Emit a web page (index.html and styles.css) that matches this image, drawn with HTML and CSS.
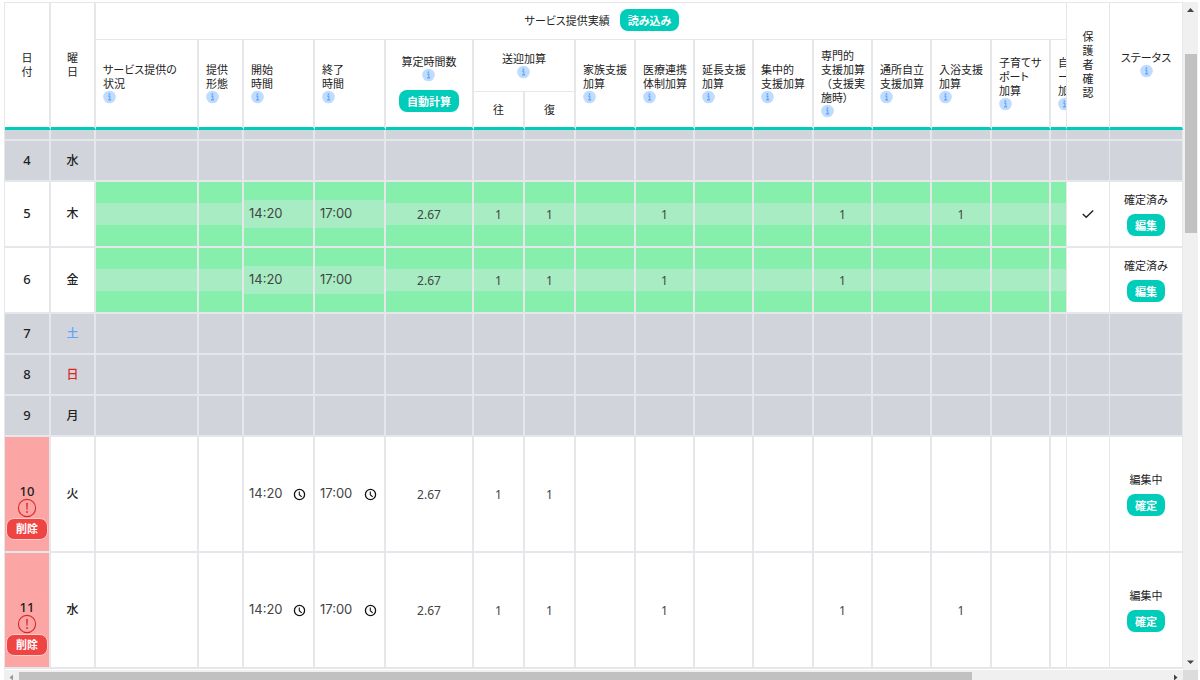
FILE: index.html
```html
<!DOCTYPE html>
<html lang="ja">
<head>
<meta charset="utf-8">
<title>サービス提供実績</title>
<link rel="stylesheet" href="styles.css">
</head>
<body>
<svg class="sprite" aria-hidden="true">
  <symbol id="i-info" viewBox="0 0 13 13">
    <circle cx="6.5" cy="6.5" r="6.3" fill="#bfdbfe"/>
    <path d="M5.2 5.6h1.6v3.6M5 9.4h3.2" fill="none" stroke="#60a5fa" stroke-width="1.1"/>
    <circle cx="6.4" cy="3.6" r=".9" fill="#60a5fa"/>
  </symbol>
  <symbol id="i-check" viewBox="0 0 12 10">
    <path d="M.8 5 4.2 8.3 11.2 1.4" fill="none" stroke="#222" stroke-width="1.4"/>
  </symbol>
  <symbol id="i-clock" viewBox="0 0 13 13">
    <circle cx="6.5" cy="6.5" r="5.1" fill="none" stroke="#111" stroke-width="1.3"/>
    <path d="M6.3 3.4v3.3l2.4 2.2" fill="none" stroke="#111" stroke-width="1.1"/>
  </symbol>
  <symbol id="i-alert" viewBox="0 0 20 20">
    <circle cx="10" cy="10" r="8.6" fill="none" stroke="#dc2626" stroke-width="1.1"/>
    <path d="M9.2 5h1.6l-.3 6.8h-1z" fill="#dc2626"/>
    <circle cx="10" cy="14" r=".9" fill="#dc2626"/>
  </symbol>
</svg>

<main class="viewport">
  <div class="pane">
    <table class="sheet">
      <colgroup>
        <col class="c-date"><col class="c-week"><col><col class="c-form">
        <col class="c-time"><col class="c-time"><col class="c-hours">
        <col class="c-ride"><col class="c-ride">
        <col class="c-wide"><col class="c-add"><col class="c-add"><col class="c-wide">
        <col class="c-add"><col class="c-add"><col class="c-wide"><col class="c-add">
        <col class="c-cut"><col class="c-guard"><col class="c-status">
      </colgroup>
      <thead>
        <tr class="h-title">
          <th rowspan="3" class="end">日<br>付</th>
          <th rowspan="3" class="end">曜<br>日</th>
          <th colspan="16" class="group thin">サービス提供実績<button type="button" class="btn">読み込み</button></th>
          <th rowspan="3" class="end thin">保<br>護<br>者<br>確<br>認</th>
          <th rowspan="3" class="end thin">ステータス<svg class="info"><use href="#i-info"/></svg></th>
        </tr>
        <tr class="h-main">
          <th rowspan="2" class="end left">サービス提供の<br>状況<svg class="info"><use href="#i-info"/></svg></th>
          <th rowspan="2" class="end left">提供<br>形態<svg class="info"><use href="#i-info"/></svg></th>
          <th rowspan="2" class="end left">開始<br>時間<svg class="info"><use href="#i-info"/></svg></th>
          <th rowspan="2" class="end left">終了<br>時間<svg class="info"><use href="#i-info"/></svg></th>
          <th rowspan="2" class="end calc">算定時間数<svg class="info"><use href="#i-info"/></svg><button type="button" class="btn">自動計算</button></th>
          <th colspan="2">送迎加算<svg class="info"><use href="#i-info"/></svg></th>
          <th rowspan="2" class="end left">家族支援<br>加算<svg class="info"><use href="#i-info"/></svg></th>
          <th rowspan="2" class="end left">医療連携<br>体制加算<svg class="info"><use href="#i-info"/></svg></th>
          <th rowspan="2" class="end left">延長支援<br>加算<svg class="info"><use href="#i-info"/></svg></th>
          <th rowspan="2" class="end left">集中的<br>支援加算<svg class="info"><use href="#i-info"/></svg></th>
          <th rowspan="2" class="end left">専門的<br>支援加算<br><span class="full">（支援実</span><br>施時）<svg class="info"><use href="#i-info"/></svg></th>
          <th rowspan="2" class="end left">通所自立<br>支援加算<svg class="info"><use href="#i-info"/></svg></th>
          <th rowspan="2" class="end left">入浴支援<br>加算<svg class="info"><use href="#i-info"/></svg></th>
          <th rowspan="2" class="end left">子育てサ<br>ポート<br>加算<svg class="info"><use href="#i-info"/></svg></th>
          <th rowspan="2" class="end left thin">自<br>ー<br>加<svg class="info"><use href="#i-info"/></svg></th>
        </tr>
        <tr class="h-ride">
          <th class="end">往</th>
          <th class="end">復</th>
        </tr>
      </thead>
      <tbody id="days"></tbody>
    </table>
  </div>
  <div class="bar vertical">
    <button type="button" class="arrow" aria-label="上へ"><svg viewBox="0 0 15 15"><path d="M4 10 7.5 6 11 10z" fill="#444"/></svg></button>
    <div class="track"><span class="thumb"></span></div>
    <button type="button" class="arrow" aria-label="下へ"><svg viewBox="0 0 15 15"><path d="M4 5.500h7L7.500 9z" fill="#444"/></svg></button>
  </div>
  <div class="bar horizontal">
    <button type="button" class="arrow" aria-label="左へ"><svg viewBox="0 0 15 15"><path d="M9 4.500v6L5.500 7.500z" fill="#999"/></svg></button>
    <div class="track"><span class="thumb"></span></div>
    <button type="button" class="arrow" aria-label="右へ"><svg viewBox="0 0 15 15"><path d="M6 4.500v6L9.500 7.500z" fill="#444"/></svg></button>
  </div>
  <div class="corner"></div>
</main>
<script src="script.js"></script>
</body>
</html>
```
FILE: styles.css
```css
* { box-sizing: border-box; }

body {
  margin: 0;
  padding: 2px 2px 0 4px;
  height: 100vh;
  overflow: hidden;
  background: #fff;
  color: #222;
  font: 11px/14px "Noto Sans CJK JP", sans-serif;
  font-feature-settings: "palt";
}

.sprite { display: none; }

button, input, select { font: inherit; color: inherit; margin: 0; }

.viewport {
  display: grid;
  grid-template-columns: minmax(0, 1fr) 15px;
  grid-template-rows: auto 15px;
}

.pane {
  border-top: 1px solid #e5e7eb;
  border-left: 1px solid #e5e7eb;
  padding-bottom: 1px;
}

/* table */
.sheet {
  width: 100%;
  table-layout: fixed;
  border-collapse: separate;
  border-spacing: 0;
}
.c-date { width: 46px; }
.c-week, .c-form { width: 45px; }
.c-time { width: 71px; }
.c-hours { width: 88px; }
.c-ride { width: 51px; }
.c-wide { width: 60px; }
.c-add { width: 59px; }
.c-cut { width: 16px; }
.c-guard { width: 43px; }
.c-status { width: 73px; }

th, td {
  padding: 0;
  border: solid #e5e7eb;
  border-width: 0 2px 2px 0;
  text-align: center;
  vertical-align: middle;
  overflow: hidden;
}
th { font-weight: 400; border-bottom-width: 1px; padding-bottom: 2px; }
th.end { border-bottom: 3px solid #00cdb9; }
th.left { padding-left: 7px; text-align: left; white-space: nowrap; }
th.group { padding-left: 42px; }
th.group .btn { margin-left: 10px; }
.thin { border-right-width: 1px; }

.h-title { height: 37px; }
.h-main { height: 52px; }
.h-ride { height: 38px; }

.full { font-feature-settings: normal; }
.info { display: block; width: 13px; height: 14px; margin: 0 auto; }
.left .info { margin: 0; }
.calc .btn { margin-top: 8px; }

.btn {
  height: 22px;
  padding: 0 8px;
  border: 0;
  border-radius: 8px;
  background: #00cdb9;
  color: #fff;
  font-weight: 700;
  line-height: 20px;
  white-space: nowrap;
}
.btn.danger {
  display: block;
  margin: 0 auto;
  padding: 0 9px;
  border: 1px solid #fecaca;
  background: #ef4444;
  font-size: 11px;
}

/* day rows */
.slice { height: 11px; }
.closed { height: 41px; }
.fixed { height: 66px; }
.editing { height: 116px; }
.slice td, .closed td { background: #d1d5db; }
.fixed .entry { background: #86efac; }
.day, .week { font-family: "Noto Sans", "Noto Sans CJK JP", sans-serif; font-size: 12px; font-weight: 500; }
.day { font-size: 13px; }
.fixed .day, .closed .day { padding-bottom: 2px; }
.sat { color: #60a5fa; }
.sun { color: #dc2626; }
.editing .day { background: #fca5a5; vertical-align: bottom; padding-bottom: 11px; }
.alert { display: block; width: 20px; height: 20px; margin: 0 auto; }

.field {
  display: block;
  width: 100%;
  height: 22px;
  padding: 0;
  border: 0;
  border-radius: 0;
  appearance: none;
  background: transparent;
  color: #444;
  font: 12px "Noto Sans", sans-serif;
  text-align: center;
  text-align-last: center;
  opacity: 1;
}
.time { display: flex; align-items: center; height: 28px; padding: 0 7px 2px 5px; }
.time .field { flex: 1; min-width: 0; height: 26px; font: 13px Inter, sans-serif; text-align: left; text-align-last: left; }
.fixed select.field, .fixed .hours, .fixed .time { background: rgba(229, 231, 235, 0.35); }
.fixed .time .field { background: transparent; }
.picker { display: flex; padding: 2px 0 0; border: 0; background: none; }
.picker svg { width: 13px; height: 13px; }
.check { display: block; width: 12px; height: 10px; margin: 0 auto; }
.state { display: flex; flex-direction: column; align-items: center; gap: 8px; }

/* scroll bars */
.bar { display: flex; background: #f0f0f0; }
.vertical { flex-direction: column; }
.arrow { flex: none; width: 15px; height: 15px; padding: 0; border: 0; background: none; }
.arrow svg { display: block; }
.track { flex: 1; display: flex; }
.vertical .track { flex-direction: column; padding: 0 1px 0 2px; }
.vertical .track::before { content: ""; flex: 37; }
.vertical .thumb { flex: 178; }
.vertical .track::after { content: ""; flex: 421; }
.horizontal .track { padding: 2px 0; }
.horizontal .thumb { flex: 952; }
.horizontal .track::after { content: ""; flex: 196; }
.thumb { background: #c1c1c1; }
.corner { background: #dcdcdc; }
```
FILE: script.js
```js
const ADDITIONS = ["家族支援加算", "医療連携体制加算", "延長支援加算", "集中的支援加算",
  "専門的支援加算", "通所自立支援加算", "入浴支援加算", "子育てサポート加算", "自立サポート加算"];

const days = [
  { kind: "slice" },
  { kind: "closed", day: 4, week: "水" },
  { kind: "fixed", day: 5, week: "木", on: [1, 4, 6], checked: true },
  { kind: "fixed", day: 6, week: "金", on: [1, 4] },
  { kind: "closed", day: 7, week: "土", tone: "sat" },
  { kind: "closed", day: 8, week: "日", tone: "sun" },
  { kind: "closed", day: 9, week: "月" },
  { kind: "editing", day: 10, week: "火", on: [] },
  { kind: "editing", day: 11, week: "水", on: [1, 4, 6] }
];

const icon = (id, cls) => `<svg class="${cls}"><use href="#i-${id}"/></svg>`;
const cell = (html, cls = "") => `<td class="${cls}">${html}</td>`;

function row(d) {
  const open = d.kind === "fixed" || d.kind === "editing";
  const off = d.kind === "fixed" ? "disabled" : "";
  const select = (label, value) =>
    `<select class="field" aria-label="${d.day}日 ${label}" ${off}><option>${value}</option></select>`;
  const time = (label, value) =>
    `<div class="time"><input class="field" type="text" aria-label="${d.day}日 ${label}" value="${value}" ${off}>` +
    (off ? "" : `<button type="button" class="picker" aria-label="時刻を選択">${icon("clock", "clock")}</button>`) + `</div>`;

  let html = cell((d.day || "") + (d.kind === "editing"
    ? icon("alert", "alert") + `<button type="button" class="btn danger">削除</button>` : ""), "day");
  html += cell(d.week || "", "week " + (d.tone || ""));

  if (!open) {
    for (let i = 0; i < 15; i++) html += cell("");
    return html + cell("", "thin").repeat(3);
  }

  html += cell(select("状況", ""), "entry") + cell(select("提供形態", ""), "entry");
  html += cell(time("開始時間", "14:20"), "entry") + cell(time("終了時間", "17:00"), "entry");
  html += cell(`<input class="field hours" type="text" aria-label="${d.day}日 算定時間数" value="2.67" ${off}>`, "entry");
  html += cell(select("往", "1"), "entry") + cell(select("復", "1"), "entry");
  ADDITIONS.forEach((name, i) => {
    html += cell(select(name, d.on.includes(i) ? "1" : ""), i === 8 ? "entry thin" : "entry");
  });
  html += cell(d.checked ? icon("check", "check") : "", "thin");
  const [label, action] = off ? ["確定済み", "編集"] : ["編集中", "確定"];
  return html + cell(`<div class="state"><span>${label}</span><button type="button" class="btn">${action}</button></div>`, "thin");
}

document.getElementById("days").innerHTML =
  days.map(d => `<tr class="${d.kind}">${row(d)}</tr>`).join("");
```
